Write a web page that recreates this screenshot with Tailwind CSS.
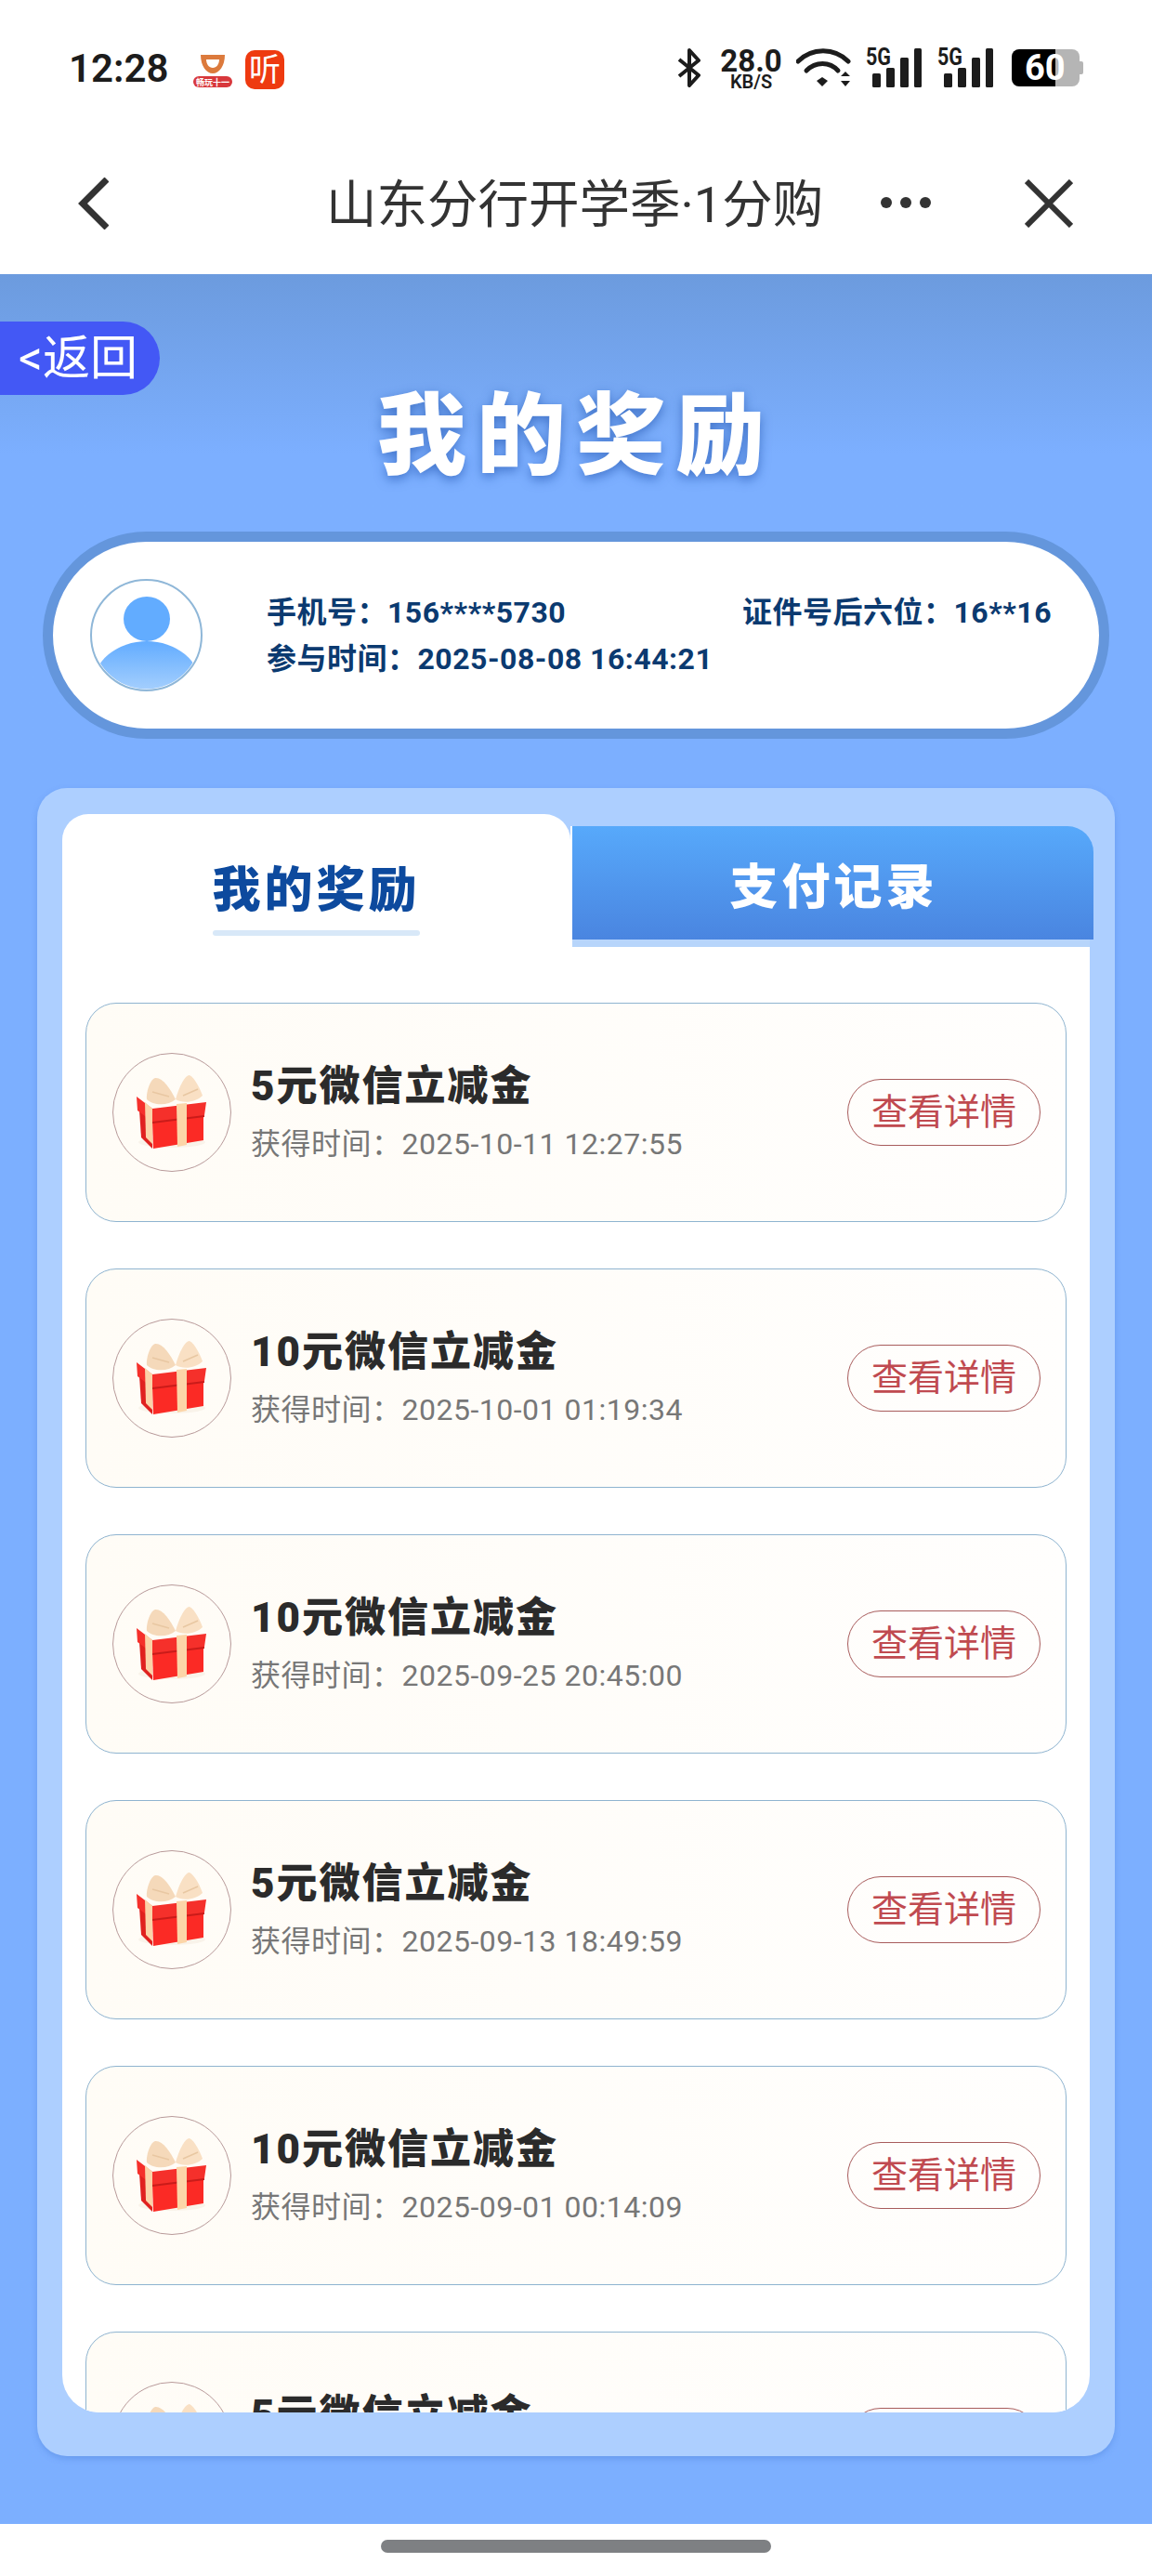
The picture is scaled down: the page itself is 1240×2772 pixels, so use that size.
<!DOCTYPE html>
<html lang="zh-CN">
<head>
  <meta charset="UTF-8" />
  <meta name="viewport" content="width=device-width, initial-scale=1.0"/>
  <title>我的奖励</title>
  <script src="https://cdn.jsdelivr.net/npm/@tailwindcss/browser@4"></script>
</head>
<body class="bg-white [font-family:Roboto,'Noto_Sans_CJK_SC',sans-serif]">
<div class="w-[1240px] h-[2772px] flex flex-col overflow-hidden">

  <!-- status bar + nav -->
  <header class="h-[295px] bg-white">
    <div class="h-[146px] flex items-center pl-[74px] pr-[74px] text-[#1c1c1c]">
      <span class="w-[104px] mt-[1px] text-[42px] font-semibold leading-none">12:28</span>
      <svg class="ml-[30px] mt-[6px] w-[42px] h-[36px]" viewBox="0 0 42 36">
        <path d="M8 1H34C34 13 28 21 21 21C14 21 8 13 8 1Z" fill="#dc7a3c"/>
        <path d="M14 6H28C28 11 25 15 21 15C17 15 14 11 14 6Z" fill="#fff"/>
        <rect x="0" y="24" width="42" height="12" rx="6" fill="#d8383c"/>
        <text x="21" y="33.500" text-anchor="middle" font-size="9" font-weight="700" fill="#fff">畅玩十一</text>
      </svg>
      <div class="ml-[14px] mt-[3px] w-[42px] h-[42px] rounded-[10px] bg-[#ee3a10] flex items-center justify-center text-white text-[34px] leading-none">听</div>

      <div class="ml-auto flex items-center">
        <svg class="w-[25px] h-[42px]" viewBox="0 0 25 42" fill="none" stroke="#1c1c1c" stroke-width="4" stroke-linejoin="round">
          <path d="M2 12L23 29L13 40V2L23 13L2 30"/>
        </svg>
        <div class="ml-[21px] mt-[2px] w-[67px] flex flex-col items-center font-bold">
          <span class="text-[33px] leading-[27px]">28.0</span>
          <span class="text-[20px] leading-[18px] font-semibold">KB/S</span>
        </div>
        <svg class="ml-[15px] w-[59px] h-[42px]" viewBox="0 0 59 42" fill="none" stroke="#1c1c1c" stroke-width="5" stroke-linecap="round">
          <path d="M2 14C17 -1 41 -1 56 14"/>
          <path d="M11 24C21 14 36 14 45 24"/>
          <path d="M22 35L28 31L34 35L28 41Z" fill="#1c1c1c" stroke="none"/>
          <path d="M53 25L58 30H48ZM48 35H58L53 41Z" fill="#1c1c1c" stroke="none"/>
        </svg>
        <svg class="ml-[16px] w-[60px] h-[42px] overflow-visible" viewBox="0 0 60 42" fill="#1c1c1c">
          <text x="0" y="18" font-size="25" font-weight="700" textLength="27" lengthAdjust="spacingAndGlyphs">5G</text>
          <rect x="7" y="27" width="9" height="15" rx="1.500"/>
          <rect x="22" y="21" width="9" height="21" rx="1.500"/>
          <rect x="37" y="10" width="9" height="32" rx="1.500"/>
          <rect x="52" y="0" width="8" height="42" rx="1.500"/>
        </svg>
        <svg class="ml-[17px] w-[60px] h-[42px] overflow-visible" viewBox="0 0 60 42" fill="#1c1c1c">
          <text x="0" y="18" font-size="25" font-weight="700" textLength="27" lengthAdjust="spacingAndGlyphs">5G</text>
          <rect x="7" y="27" width="9" height="15" rx="1.500"/>
          <rect x="22" y="21" width="9" height="21" rx="1.500"/>
          <rect x="37" y="10" width="9" height="32" rx="1.500"/>
          <rect x="52" y="0" width="8" height="42" rx="1.500"/>
        </svg>
        <div class="ml-[20px] flex items-center">
          <div class="w-[73px] h-[40px] rounded-[8px] bg-[linear-gradient(90deg,#000_47px,#b5b5b5_47px)] pl-[14px] text-[38px] leading-[40px] font-bold text-white">60</div>
          <div class="w-[4px] h-[14px] bg-[#b5b5b5] rounded-r-[2px]"></div>
        </div>
      </div>
    </div>

    <nav class="h-[146px] flex items-center pl-[84px] text-[#333]">
      <svg class="w-[33px] h-[56px]" viewBox="0 0 33 56" fill="none" stroke="#333" stroke-width="7">
        <path d="M31 2L5 28L31 54"/>
      </svg>
      <h2 class="ml-[234px] mt-[3px] w-[536px] text-[54.5px] leading-none whitespace-nowrap">山东分行开学季·1分购</h2>
      <div class="ml-[61px] mb-[2px] w-[54px] flex justify-between">
        <span class="w-[12px] h-[12px] rounded-full bg-[#333]"></span>
        <span class="w-[12px] h-[12px] rounded-full bg-[#333]"></span>
        <span class="w-[12px] h-[12px] rounded-full bg-[#333]"></span>
      </div>
      <svg class="ml-[101px] w-[52px] h-[52px]" viewBox="0 0 52 52" fill="none" stroke="#333" stroke-width="6">
        <path d="M2 2L50 50M50 2L2 50"/>
      </svg>
    </nav>
  </header>

  <!-- page -->
  <main class="relative h-[2421px] bg-linear-to-b from-[#6c9bde] to-[#7cafff] to-[8%]">
    <a class="absolute left-0 top-[51px] w-[172px] h-[79px] rounded-r-full bg-[#4358f5] text-white text-[51px] leading-[79px] pl-[20px] whitespace-nowrap">&lt;返回</a>

    <h1 class="pt-[114px] mb-[43px] text-center text-white text-[96px] leading-[120px] font-black tracking-[11px] [text-shadow:0_4px_12px_rgba(30,80,170,.6)]">我的奖励</h1>

    <!-- user info -->
    <section class="ml-[46px] w-[1148px] h-[223px] rounded-[112px] border-[11px] border-[#6496dc] bg-white flex items-center pl-[40px]">
      <svg class="w-[121px] h-[121px]" viewBox="0 0 121 121">
        <defs>
          <linearGradient id="bodyFill" x1="0" y1="0" x2="0" y2="1">
            <stop offset="0" stop-color="#62acff"/>
            <stop offset="1" stop-color="#dcecfc"/>
          </linearGradient>
          <clipPath id="avatarClip"><circle cx="60.500" cy="60.500" r="58"/></clipPath>
        </defs>
        <circle cx="60.500" cy="60.500" r="59.500" fill="#fff" stroke="#8fb7d8" stroke-width="2"/>
        <g clip-path="url(#avatarClip)">
          <ellipse cx="61" cy="43" rx="25" ry="24" fill="#62acff"/>
          <ellipse cx="61" cy="115" rx="58" ry="48" fill="url(#bodyFill)"/>
        </g>
      </svg>
      <div class="ml-[69px] w-[845px] text-[#0b3a70] text-[32px] font-bold leading-[50px] tracking-[0.5px]">
        <div class="flex justify-between">
          <span>手机号：156****5730</span>
          <span>证件号后六位：16**16</span>
        </div>
        <div>参与时间：2025-08-08 16:44:21</div>
      </div>
    </section>

    <!-- rewards panel -->
    <section class="mt-[53px] ml-[40px] w-[1160px] h-[1795px] rounded-[32px] bg-[#adcfff] px-[27px] pt-[28px] shadow-[0_3px_6px_rgba(70,120,210,.35)]">
      <div class="flex h-[143px]">
        <div class="w-[547px] rounded-t-[28px] bg-white flex flex-col items-center pt-[51px]">
          <span class="text-[52px] leading-[64px] font-black text-[#0d4a9e] tracking-[4px]">我的奖励</span>
          <span class="mt-[10px] w-[223px] h-[6px] rounded-full bg-[#d8e8f8]"></span>
        </div>
        <div class="w-[563px] mr-[-4px] mt-[13px] flex flex-col border-l-2 border-white">
          <div class="h-[122px] pt-[12px] pl-[2px] rounded-tr-[28px] bg-linear-to-b from-[#57a9fb] to-[#4a85e0] flex items-center justify-center text-white text-[52px] font-black tracking-[4px]">支付记录</div>
          <div class="w-[557px] h-[8px] bg-[#b7d5fb]"></div>
        </div>
      </div>
      <div id="list" class="h-[1577px] rounded-b-[40px] bg-white overflow-hidden px-[25px] pt-[60px] flex flex-col gap-[50px]"></div>
    </section>
  </main>

  <div class="h-[56px] bg-white pt-[17px]">
    <div class="mx-auto w-[420px] h-[14px] rounded-full bg-[#7e8083]"></div>
  </div>
</div>

<script>
  const rewards = [
    ["5元微信立减金", "获得时间：2025-10-11 12:27:55"],
    ["10元微信立减金", "获得时间：2025-10-01 01:19:34"],
    ["10元微信立减金", "获得时间：2025-09-25 20:45:00"],
    ["5元微信立减金", "获得时间：2025-09-13 18:49:59"],
    ["10元微信立减金", "获得时间：2025-09-01 00:14:09"],
    ["5元微信立减金", "获得时间："]
  ];

  const gift = `
    <svg class="w-[76px] h-[80px]" viewBox="0 0 76 80">
      <ellipse cx="38" cy="72" rx="36" ry="6" fill="#f9f3ea"/>
      <path d="M3 38L17 49V79L5 67Z" fill="#e0211f"/>
      <path d="M17 49L72 42V70L18 79Z" fill="#fb2a25"/>
      <path d="M0 23L17 36L75 29L73 43L17 50L1 38Z" fill="#f5302b"/>
      <path d="M17 50L73 43V45L17 52Z" fill="#c91c1a"/>
      <path d="M9 29L17 36V74L10 67Z" fill="#fbd3a8"/>
      <path d="M43 31L54 30V75L44 77Z" fill="#fcd5a8"/>
      <path d="M42 26C36 14 28 2 20 3C14 5 10 20 11 26C18 33 34 33 42 26Z" fill="#f5d9ba"/>
      <path d="M42 26C46 12 52 0 57 0C63 3 69 16 71 22C64 29 50 31 42 26Z" fill="#f9e0c4"/>
      <path d="M17 18L35 23M66 15L50 22" stroke="#e8c7a2" stroke-width="1.500" fill="none"/>
    </svg>`;

  const lista = document.getElementById("list");
  rewards.forEach(([titulo, tiempo]) => {
    const tarjeta = document.createElement("div");
    tarjeta.className = "shrink-0 w-[1056px] h-[236px] rounded-[33px] border border-[#8fb4d0] bg-linear-to-r from-[#fffcf6] to-[#fffefd] flex items-center pl-[28px] pr-[27px]";
    tarjeta.innerHTML = `
      <div class="w-[128px] h-[128px] shrink-0 rounded-full border border-[#b89a9a] flex items-center justify-center">${gift}</div>
      <div class="ml-[21px] flex flex-col gap-[12px]">
        <span class="text-[44px] leading-[56px] font-black text-[#2b2b2b] tracking-[2px]">${titulo}</span>
        <span class="text-[32px] leading-[44px] text-[#777] tracking-[0.5px]">${tiempo}</span>
      </div>
      <a class="ml-auto w-[208px] h-[72px] rounded-full border border-[#a85c5c] flex items-center justify-center text-[39px] text-[#c04a50]">查看详情</a>
    `;
    lista.appendChild(tarjeta);
  });
</script>
</body>
</html>
